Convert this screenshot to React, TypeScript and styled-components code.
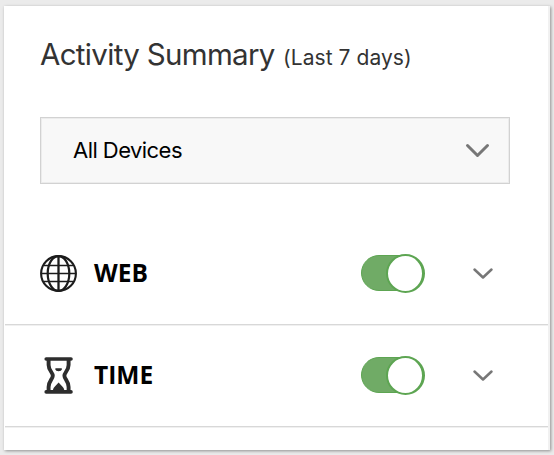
import React from "react";
import styled, { createGlobalStyle } from "styled-components";

const GlobalStyle = createGlobalStyle`
  * { box-sizing: border-box; }
  body { margin: 0; background: #ebebeb; font-family: Inter, "Liberation Sans", sans-serif; }
`;

const Page = styled.main`
  height: 455px;
  padding: 6px 4px 5px 4px;
  overflow: hidden;
`;

const Card = styled.section`
  height: 444px;
  background: #fff;
  border-right: 2px solid #f1f1f1;
  box-shadow: 1px 1px 3px rgba(0, 0, 0, 0.4);
`;

const Header = styled.header`
  display: flex;
  align-items: baseline;
  height: 111px;
  padding: 30px 0 0 36px;
  color: #333;
  white-space: nowrap;
`;

const Title = styled.h1`
  margin: 0;
  width: 243px;
  font-size: 29.5px;
  line-height: 36px;
  font-weight: 400;
  letter-spacing: -0.68px;
`;

const Period = styled.span`
  font-size: 21px;
  letter-spacing: 0.06px;
`;

const Select = styled.button`
  display: flex;
  align-items: center;
  justify-content: space-between;
  width: 470px;
  height: 67px;
  margin: 0 0 0 36px;
  padding: 0 20px 0 32px;
  border: 1px solid #d2d2d2;
  box-shadow: inset 0 0 0 1px #ececec;
  background: #f8f8f8;
  color: #000;
  font: 400 22px/28px Inter, sans-serif;
  letter-spacing: -0.55px;
`;

const SelectText = styled.span`
  padding-bottom: 2px;
`;

const Rows = styled.div`
  padding: 39px 0 0 1px;
`;

const Row = styled.div`
  display: grid;
  grid-template-columns: 53px 268px 111.5px 20px;
  align-items: center;
  height: 102px;
  padding: 0 0 1px 35px;
  border-bottom: 1px solid #d8d8d8;
  box-shadow: 0 1px 0 #f0f0f0;
`;

const Label = styled.span`
  padding: 0 0 0 1px;
  font-family: "Open Sans", sans-serif;
  font-size: 24.5px;
  line-height: 30px;
  font-weight: 700;
  color: #000;
`;

const Track = styled.span`
  display: flex;
  align-items: center;
  justify-content: flex-end;
  width: 63px;
  height: 36px;
  border: 1px solid #5da552;
  border-radius: 18px;
  background: #70ab66;
`;

const Knob = styled.span`
  flex: none;
  width: 39px;
  height: 39px;
  margin-right: -2px;
  border: 2px solid #5da552;
  border-right-width: 3px;
  border-radius: 50%;
  background: #fff;
`;

const Icon = styled.svg`
  display: block;
  fill: none;
  overflow: visible;
`;

const Chevron = ({ width, height, stroke }: { width: number; height: number; stroke: number }) => (
  <Icon width={width} height={height} viewBox={`0 0 ${width} ${height}`} stroke="#777" strokeWidth={stroke} strokeLinecap="round" strokeLinejoin="round">
    <path d={`M1.5 1.5 L${width / 2} ${height - 1.5} L${width - 1.5} 1.5`} />
  </Icon>
);

const Globe = () => (
  <Icon width="37" height="37" viewBox="0 0 37 37" stroke="#1c1c1c">
    <circle cx="18.5" cy="18.5" r="17.4" strokeWidth="2.1" />
    <ellipse cx="18.5" cy="18.5" rx="10.8" ry="17.4" strokeWidth="2.2" />
    <path d="M18.5 1v35" strokeWidth="2.3" />
    <path d="M1 18.5h35M4 10.5h29M4 26.5h29" strokeWidth="1.6" />
  </Icon>
);

const Hourglass = () => (
  <Icon width="37" height="37" viewBox="0 0 37 37">
    <path d="M6.2 2h24.8M6.2 34.9h24.8" stroke="#2d2d2d" strokeWidth="3.6" strokeLinecap="round" />
    <path d="M8.6 3v5c0 5.5 4.2 7.4 4.2 10.7S8.6 24 8.6 30v4M28.6 3v5c0 5.5-4.2 7.4-4.2 10.7s4.2 5.3 4.2 11.3v4" stroke="#2d2d2d" strokeWidth="3.9" />
    <path d="M16 11.2h5.2q1 0 .8 1-.5 2-3.4 2t-3.4-2q-.2-1 .8-1zM12.6 34q.3-3 2.5-4.7l3.5-3.7 3.5 3.7q2.2 1.7 2.5 4.7z" fill="#2d2d2d" />
  </Icon>
);

const rows = [
  { label: "WEB", icon: <Globe /> },
  { label: "TIME", icon: <Hourglass /> },
];

export default function App() {
  return (
    <>
      <GlobalStyle />
      <Page>
        <Card>
          <Header>
            <Title>Activity Summary</Title>
            <Period>(Last 7 days)</Period>
          </Header>
          <Select>
            <SelectText>All Devices</SelectText>
            <Chevron width={23} height={13} stroke={3} />
          </Select>
          <Rows>
            {rows.map((r) => (
              <Row key={r.label}>
                {r.icon}
                <Label>{r.label}</Label>
                <Track role="switch" aria-checked="true"><Knob /></Track>
                <Chevron width={20} height={11} stroke={2.5} />
              </Row>
            ))}
          </Rows>
        </Card>
      </Page>
    </>
  );
}
